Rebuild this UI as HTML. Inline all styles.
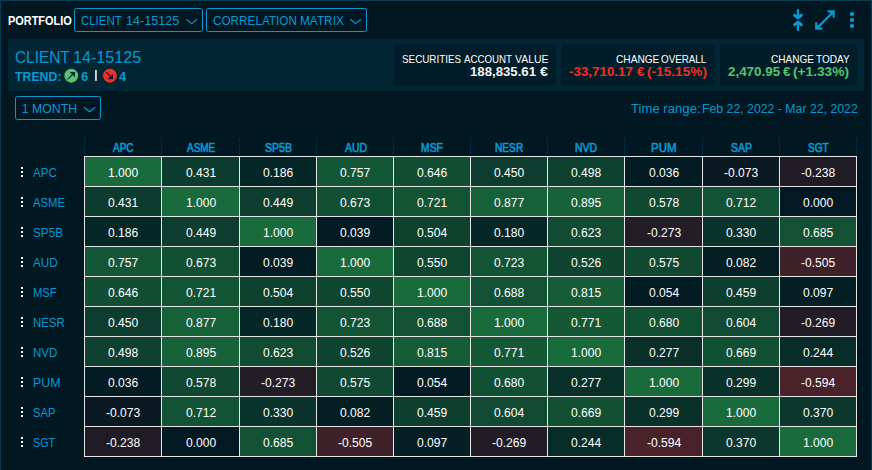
<!DOCTYPE html><html><head><meta charset="utf-8"><title>Portfolio</title><style>
html,body{margin:0;padding:0}body{width:872px;height:470px;background:#011721;overflow:hidden;position:relative;font-family:"Liberation Sans",sans-serif}
.a{position:absolute}.t{position:absolute;white-space:pre;line-height:1;margin:0}
.frame{left:0;top:0;width:872px;height:470px;box-sizing:border-box;border:1px solid #083c50;border-bottom:none}
.dd{box-sizing:border-box;border:1px solid #0b98d0;border-radius:2.4px;height:24px}
.box{background:#021d2a;border-radius:4px;top:44px;height:42px}
.hl{background:#e6e6e6;height:1px}.vl{background:#e6e6e6;width:1px}
.dv{width:1px;background:repeating-linear-gradient(to bottom,#093a52 0,#093a52 1px,transparent 1px,transparent 2px);top:138px;height:17px}
.k{width:2.5px;height:2.5px;background:#fff;left:20.75px}
</style></head><body>
<div class="a frame"></div>
<div class="a dd" style="left:74px;top:8px;width:129px"></div>
<div class="a dd" style="left:206px;top:8px;width:161px"></div>
<div class="a" style="left:8px;top:39px;width:856px;height:52px;background:#022634"></div>
<div class="a box" style="left:394px;width:162px"></div>
<div class="a box" style="left:561px;width:154px"></div>
<div class="a box" style="left:720px;width:137px"></div>
<div class="a dd" style="left:15px;top:96px;width:86px"></div>
<div class="a" style="left:84px;top:156px;width:77px;height:30px;background:#1a6b3c"></div>
<div class="a" style="left:161px;top:156px;width:78px;height:30px;background:#0c3c2d"></div>
<div class="a" style="left:239px;top:156px;width:77px;height:30px;background:#062727"></div>
<div class="a" style="left:316px;top:156px;width:77px;height:30px;background:#145736"></div>
<div class="a" style="left:393px;top:156px;width:77px;height:30px;background:#124e33"></div>
<div class="a" style="left:470px;top:156px;width:77px;height:30px;background:#0d3d2e"></div>
<div class="a" style="left:547px;top:156px;width:77px;height:30px;background:#0e412f"></div>
<div class="a" style="left:624px;top:156px;width:78px;height:30px;background:#031b23"></div>
<div class="a" style="left:702px;top:156px;width:77px;height:30px;background:#0b1923"></div>
<div class="a" style="left:779px;top:156px;width:77px;height:30px;background:#1f1c25"></div>
<div class="a" style="left:84px;top:186px;width:77px;height:30px;background:#0c3c2d"></div>
<div class="a" style="left:161px;top:186px;width:78px;height:30px;background:#1a6b3c"></div>
<div class="a" style="left:239px;top:186px;width:77px;height:30px;background:#0d3d2e"></div>
<div class="a" style="left:316px;top:186px;width:77px;height:30px;background:#125033"></div>
<div class="a" style="left:393px;top:186px;width:77px;height:30px;background:#135435"></div>
<div class="a" style="left:470px;top:186px;width:77px;height:30px;background:#176139"></div>
<div class="a" style="left:547px;top:186px;width:77px;height:30px;background:#176239"></div>
<div class="a" style="left:624px;top:186px;width:78px;height:30px;background:#104831"></div>
<div class="a" style="left:702px;top:186px;width:77px;height:30px;background:#135335"></div>
<div class="a" style="left:779px;top:186px;width:77px;height:30px;background:#021822"></div>
<div class="a" style="left:84px;top:216px;width:77px;height:30px;background:#062727"></div>
<div class="a" style="left:161px;top:216px;width:78px;height:30px;background:#0d3d2e"></div>
<div class="a" style="left:239px;top:216px;width:77px;height:30px;background:#1a6b3c"></div>
<div class="a" style="left:316px;top:216px;width:77px;height:30px;background:#031b23"></div>
<div class="a" style="left:393px;top:216px;width:77px;height:30px;background:#0e422f"></div>
<div class="a" style="left:470px;top:216px;width:77px;height:30px;background:#062727"></div>
<div class="a" style="left:547px;top:216px;width:77px;height:30px;background:#114c32"></div>
<div class="a" style="left:624px;top:216px;width:78px;height:30px;background:#231d26"></div>
<div class="a" style="left:702px;top:216px;width:77px;height:30px;background:#0a332b"></div>
<div class="a" style="left:779px;top:216px;width:77px;height:30px;background:#125134"></div>
<div class="a" style="left:84px;top:246px;width:77px;height:30px;background:#145736"></div>
<div class="a" style="left:161px;top:246px;width:78px;height:30px;background:#125033"></div>
<div class="a" style="left:239px;top:246px;width:77px;height:30px;background:#031b23"></div>
<div class="a" style="left:316px;top:246px;width:77px;height:30px;background:#1a6b3c"></div>
<div class="a" style="left:393px;top:246px;width:77px;height:30px;background:#0f4630"></div>
<div class="a" style="left:470px;top:246px;width:77px;height:30px;background:#135435"></div>
<div class="a" style="left:547px;top:246px;width:77px;height:30px;background:#0f4430"></div>
<div class="a" style="left:624px;top:246px;width:78px;height:30px;background:#104831"></div>
<div class="a" style="left:702px;top:246px;width:77px;height:30px;background:#041f24"></div>
<div class="a" style="left:779px;top:246px;width:77px;height:30px;background:#3f2129"></div>
<div class="a" style="left:84px;top:276px;width:77px;height:30px;background:#124e33"></div>
<div class="a" style="left:161px;top:276px;width:78px;height:30px;background:#135435"></div>
<div class="a" style="left:239px;top:276px;width:77px;height:30px;background:#0e422f"></div>
<div class="a" style="left:316px;top:276px;width:77px;height:30px;background:#0f4630"></div>
<div class="a" style="left:393px;top:276px;width:77px;height:30px;background:#1a6b3c"></div>
<div class="a" style="left:470px;top:276px;width:77px;height:30px;background:#135134"></div>
<div class="a" style="left:547px;top:276px;width:77px;height:30px;background:#165c37"></div>
<div class="a" style="left:624px;top:276px;width:78px;height:30px;background:#031c23"></div>
<div class="a" style="left:702px;top:276px;width:77px;height:30px;background:#0d3e2e"></div>
<div class="a" style="left:779px;top:276px;width:77px;height:30px;background:#042025"></div>
<div class="a" style="left:84px;top:306px;width:77px;height:30px;background:#0d3d2e"></div>
<div class="a" style="left:161px;top:306px;width:78px;height:30px;background:#176139"></div>
<div class="a" style="left:239px;top:306px;width:77px;height:30px;background:#062727"></div>
<div class="a" style="left:316px;top:306px;width:77px;height:30px;background:#135435"></div>
<div class="a" style="left:393px;top:306px;width:77px;height:30px;background:#135134"></div>
<div class="a" style="left:470px;top:306px;width:77px;height:30px;background:#1a6b3c"></div>
<div class="a" style="left:547px;top:306px;width:77px;height:30px;background:#155836"></div>
<div class="a" style="left:624px;top:306px;width:78px;height:30px;background:#125034"></div>
<div class="a" style="left:702px;top:306px;width:77px;height:30px;background:#104a32"></div>
<div class="a" style="left:779px;top:306px;width:77px;height:30px;background:#221d25"></div>
<div class="a" style="left:84px;top:336px;width:77px;height:30px;background:#0e412f"></div>
<div class="a" style="left:161px;top:336px;width:78px;height:30px;background:#176239"></div>
<div class="a" style="left:239px;top:336px;width:77px;height:30px;background:#114c32"></div>
<div class="a" style="left:316px;top:336px;width:77px;height:30px;background:#0f4430"></div>
<div class="a" style="left:393px;top:336px;width:77px;height:30px;background:#165c37"></div>
<div class="a" style="left:470px;top:336px;width:77px;height:30px;background:#155836"></div>
<div class="a" style="left:547px;top:336px;width:77px;height:30px;background:#1a6b3c"></div>
<div class="a" style="left:624px;top:336px;width:78px;height:30px;background:#092f29"></div>
<div class="a" style="left:702px;top:336px;width:77px;height:30px;background:#125033"></div>
<div class="a" style="left:779px;top:336px;width:77px;height:30px;background:#082c28"></div>
<div class="a" style="left:84px;top:366px;width:77px;height:30px;background:#031b23"></div>
<div class="a" style="left:161px;top:366px;width:78px;height:30px;background:#104831"></div>
<div class="a" style="left:239px;top:366px;width:77px;height:30px;background:#231d26"></div>
<div class="a" style="left:316px;top:366px;width:77px;height:30px;background:#104831"></div>
<div class="a" style="left:393px;top:366px;width:77px;height:30px;background:#031c23"></div>
<div class="a" style="left:470px;top:366px;width:77px;height:30px;background:#125034"></div>
<div class="a" style="left:547px;top:366px;width:77px;height:30px;background:#092f29"></div>
<div class="a" style="left:624px;top:366px;width:78px;height:30px;background:#1a6b3c"></div>
<div class="a" style="left:702px;top:366px;width:77px;height:30px;background:#09312a"></div>
<div class="a" style="left:779px;top:366px;width:77px;height:30px;background:#49222a"></div>
<div class="a" style="left:84px;top:396px;width:77px;height:30px;background:#0b1923"></div>
<div class="a" style="left:161px;top:396px;width:78px;height:30px;background:#135335"></div>
<div class="a" style="left:239px;top:396px;width:77px;height:30px;background:#0a332b"></div>
<div class="a" style="left:316px;top:396px;width:77px;height:30px;background:#041f24"></div>
<div class="a" style="left:393px;top:396px;width:77px;height:30px;background:#0d3e2e"></div>
<div class="a" style="left:470px;top:396px;width:77px;height:30px;background:#104a32"></div>
<div class="a" style="left:547px;top:396px;width:77px;height:30px;background:#125033"></div>
<div class="a" style="left:624px;top:396px;width:78px;height:30px;background:#09312a"></div>
<div class="a" style="left:702px;top:396px;width:77px;height:30px;background:#1a6b3c"></div>
<div class="a" style="left:779px;top:396px;width:77px;height:30px;background:#0b372c"></div>
<div class="a" style="left:84px;top:426px;width:77px;height:30px;background:#1f1c25"></div>
<div class="a" style="left:161px;top:426px;width:78px;height:30px;background:#021822"></div>
<div class="a" style="left:239px;top:426px;width:77px;height:30px;background:#125134"></div>
<div class="a" style="left:316px;top:426px;width:77px;height:30px;background:#3f2129"></div>
<div class="a" style="left:393px;top:426px;width:77px;height:30px;background:#042025"></div>
<div class="a" style="left:470px;top:426px;width:77px;height:30px;background:#221d25"></div>
<div class="a" style="left:547px;top:426px;width:77px;height:30px;background:#082c28"></div>
<div class="a" style="left:624px;top:426px;width:78px;height:30px;background:#49222a"></div>
<div class="a" style="left:702px;top:426px;width:77px;height:30px;background:#0b372c"></div>
<div class="a" style="left:779px;top:426px;width:77px;height:30px;background:#1a6b3c"></div>
<div class="a hl" style="left:84px;top:156px;width:773px"></div>
<div class="a hl" style="left:84px;top:186px;width:773px"></div>
<div class="a hl" style="left:84px;top:216px;width:773px"></div>
<div class="a hl" style="left:84px;top:246px;width:773px"></div>
<div class="a hl" style="left:84px;top:276px;width:773px"></div>
<div class="a hl" style="left:84px;top:306px;width:773px"></div>
<div class="a hl" style="left:84px;top:336px;width:773px"></div>
<div class="a hl" style="left:84px;top:366px;width:773px"></div>
<div class="a hl" style="left:84px;top:396px;width:773px"></div>
<div class="a hl" style="left:84px;top:426px;width:773px"></div>
<div class="a hl" style="left:84px;top:456px;width:773px"></div>
<div class="a vl" style="left:84px;top:156px;height:301px"></div>
<div class="a dv" style="left:84px"></div>
<div class="a vl" style="left:161px;top:156px;height:301px"></div>
<div class="a dv" style="left:161px"></div>
<div class="a vl" style="left:239px;top:156px;height:301px"></div>
<div class="a dv" style="left:239px"></div>
<div class="a vl" style="left:316px;top:156px;height:301px"></div>
<div class="a dv" style="left:316px"></div>
<div class="a vl" style="left:393px;top:156px;height:301px"></div>
<div class="a dv" style="left:393px"></div>
<div class="a vl" style="left:470px;top:156px;height:301px"></div>
<div class="a dv" style="left:470px"></div>
<div class="a vl" style="left:547px;top:156px;height:301px"></div>
<div class="a dv" style="left:547px"></div>
<div class="a vl" style="left:624px;top:156px;height:301px"></div>
<div class="a dv" style="left:624px"></div>
<div class="a vl" style="left:702px;top:156px;height:301px"></div>
<div class="a dv" style="left:702px"></div>
<div class="a vl" style="left:779px;top:156px;height:301px"></div>
<div class="a dv" style="left:779px"></div>
<div class="a vl" style="left:856px;top:156px;height:301px"></div>
<div class="a dv" style="left:856px"></div>
<div class="a k" style="top:166.75px"></div>
<div class="a k" style="top:170.75px"></div>
<div class="a k" style="top:174.75px"></div>
<div class="a k" style="top:196.75px"></div>
<div class="a k" style="top:200.75px"></div>
<div class="a k" style="top:204.75px"></div>
<div class="a k" style="top:226.75px"></div>
<div class="a k" style="top:230.75px"></div>
<div class="a k" style="top:234.75px"></div>
<div class="a k" style="top:256.75px"></div>
<div class="a k" style="top:260.75px"></div>
<div class="a k" style="top:264.75px"></div>
<div class="a k" style="top:286.75px"></div>
<div class="a k" style="top:290.75px"></div>
<div class="a k" style="top:294.75px"></div>
<div class="a k" style="top:316.75px"></div>
<div class="a k" style="top:320.75px"></div>
<div class="a k" style="top:324.75px"></div>
<div class="a k" style="top:346.75px"></div>
<div class="a k" style="top:350.75px"></div>
<div class="a k" style="top:354.75px"></div>
<div class="a k" style="top:376.75px"></div>
<div class="a k" style="top:380.75px"></div>
<div class="a k" style="top:384.75px"></div>
<div class="a k" style="top:406.75px"></div>
<div class="a k" style="top:410.75px"></div>
<div class="a k" style="top:414.75px"></div>
<div class="a k" style="top:436.75px"></div>
<div class="a k" style="top:440.75px"></div>
<div class="a k" style="top:444.75px"></div>
<svg class="a" style="left:0;top:0" width="872" height="470" viewBox="0 0 872 470">
<polyline points="186.7,19.5 191.75,23.6 196.8,19.5" fill="none" stroke="#0b98d0" stroke-width="1.15" stroke-linecap="round" stroke-linejoin="round"/>
<polyline points="350.5,19.5 355.6,23.6 360.7,19.5" fill="none" stroke="#0b98d0" stroke-width="1.15" stroke-linecap="round" stroke-linejoin="round"/>
<polyline points="84.3,107.5 89.6,111.8 94.9,107.5" fill="none" stroke="#0b98d0" stroke-width="1.15" stroke-linecap="round" stroke-linejoin="round"/>
<circle cx="71.3" cy="75.7" r="6.95" fill="#5cc468"/>
<path d="M67.6 79.3 L73.6 73.3" fill="none" stroke="#0b2440" stroke-width="1.1"/>
<path d="M69.6 71.9 H75.0 V77.3 Z" fill="#0b2440"/>
<circle cx="109.9" cy="75.7" r="6.95" fill="#ee3124"/>
<path d="M106.3 72.2 L112 77.9" fill="none" stroke="#2a1030" stroke-width="1.1"/>
<path d="M107.4 79.2 H113.0 V73.8 Z" fill="#2a1030"/>
<rect x="95.1" y="70" width="1.7" height="10.9" fill="#f1e9dc"/>
<path d="M798 10.1 V18 M798 29.9 V22" fill="none" stroke="#0b98d0" stroke-width="2.4" stroke-linecap="round"/>
<path d="M794.6 15.3 L798 17.9 L801.4 15.3 M794.6 24.7 L798 22.1 L801.4 24.7" fill="none" stroke="#0b98d0" stroke-width="3" stroke-linecap="round" stroke-linejoin="round"/>
<path d="M817.6 27.6 L833 12.2" fill="none" stroke="#0b98d0" stroke-width="2.2"/>
<path d="M828.4 11.4 H833.7 V16.8 M816.2 23.2 V28.6 H821.6" fill="none" stroke="#0b98d0" stroke-width="2.2" stroke-linecap="round" stroke-linejoin="miter"/>
<path d="M829.2 11.4 H833.7 V15.9 Z M816.2 24.1 V28.6 H820.7 Z" fill="#0b98d0"/>
<circle cx="852" cy="14.1" r="2.15" fill="#0b98d0"/>
<circle cx="852" cy="20.1" r="2.15" fill="#0b98d0"/>
<circle cx="852" cy="26.1" r="2.15" fill="#0b98d0"/>
</svg>
<div class="t" style="font-size:13.43px;color:#ffffff;font-weight:700;left:7.89px;top:13.63px;transform-origin:0 0;transform:scaleX(0.8143);">PORTFOLIO</div>
<div class="t" style="font-size:13.43px;color:#0b98d0;font-weight:400;left:81.06px;top:13.63px;transform-origin:0 0;transform:scaleX(0.8513);">CLIENT</div>
<div class="t" style="font-size:13.43px;color:#0b98d0;font-weight:400;left:126.06px;top:13.63px;transform-origin:0 0;transform:scaleX(0.9394);">14-15125</div>
<div class="t" style="font-size:13.43px;color:#0b98d0;font-weight:400;left:212.94px;top:13.63px;transform-origin:0 0;transform:scaleX(0.8743);">CORRELATION</div>
<div class="t" style="font-size:13.43px;color:#0b98d0;font-weight:400;left:299.82px;top:13.63px;transform-origin:0 0;transform:scaleX(0.8825);">MATRIX</div>
<div class="t" style="font-size:17.27px;color:#0b98d0;font-weight:400;left:14.73px;top:49.18px;transform-origin:0 0;transform:scaleX(0.8913);">CLIENT</div>
<div class="t" style="font-size:17.27px;color:#0b98d0;font-weight:400;left:73.03px;top:49.18px;transform-origin:0 0;transform:scaleX(0.9366);">14-15125</div>
<div class="t" style="font-size:13.43px;color:#0b98d0;font-weight:700;left:15.40px;top:69.63px;transform-origin:0 0;transform:scaleX(0.9172);">TREND:</div>
<div class="t" style="font-size:13.43px;color:#0b98d0;font-weight:700;left:80.61px;top:69.63px;transform-origin:0 0;transform:scaleX(0.9846);">6</div>
<div class="t" style="font-size:13.43px;color:#0b98d0;font-weight:700;left:118.96px;top:69.63px;transform-origin:0 0;transform:scaleX(0.9655);">4</div>
<div class="t" style="font-size:13.43px;color:#0b98d0;font-weight:400;left:22.15px;top:101.63px;transform-origin:0 0;transform:scaleX(0.8522);">1</div>
<div class="t" style="font-size:13.43px;color:#0b98d0;font-weight:400;left:31.79px;top:101.63px;transform-origin:0 0;transform:scaleX(0.9143);">MONTH</div>
<div class="t" style="font-size:11.51px;color:#ffffff;font-weight:400;left:402.27px;top:54.26px;transform-origin:0 0;transform:scaleX(0.8559);">SECURITIES</div>
<div class="t" style="font-size:11.51px;color:#ffffff;font-weight:400;left:464.20px;top:54.26px;transform-origin:0 0;transform:scaleX(0.8441);">ACCOUNT</div>
<div class="t" style="font-size:11.51px;color:#ffffff;font-weight:400;left:514.60px;top:54.26px;transform-origin:0 0;transform:scaleX(0.9068);">VALUE</div>
<div class="t" style="font-size:13.43px;color:#f2f2f2;font-weight:700;left:470.06px;top:65.33px;transform-origin:0 0;transform:scaleX(0.9826);">188,835.61</div>
<div class="t" style="font-size:13.43px;color:#f2f2f2;font-weight:700;left:540.00px;top:65.33px;transform-origin:0 0;transform:scaleX(1.0621);">€</div>
<div class="t" style="font-size:11.51px;color:#ffffff;font-weight:400;left:616.06px;top:54.26px;transform-origin:0 0;transform:scaleX(0.8808);">CHANGE</div>
<div class="t" style="font-size:11.51px;color:#ffffff;font-weight:400;left:661.47px;top:54.26px;transform-origin:0 0;transform:scaleX(0.8536);">OVERALL</div>
<div class="t" style="font-size:13.43px;color:#ee3124;font-weight:700;left:569.10px;top:65.33px;transform-origin:0 0;transform:scaleX(0.9960);">-33,710.17</div>
<div class="t" style="font-size:13.43px;color:#ee3124;font-weight:700;left:636.70px;top:65.33px;transform-origin:0 0;transform:scaleX(0.9931);">€</div>
<div class="t" style="font-size:13.43px;color:#ee3124;font-weight:700;left:647.24px;top:65.33px;transform-origin:0 0;transform:scaleX(1.0174);">(-15.15%)</div>
<div class="t" style="font-size:11.51px;color:#ffffff;font-weight:400;left:770.66px;top:54.26px;transform-origin:0 0;transform:scaleX(0.8746);">CHANGE</div>
<div class="t" style="font-size:11.51px;color:#ffffff;font-weight:400;left:815.98px;top:54.26px;transform-origin:0 0;transform:scaleX(0.8737);">TODAY</div>
<div class="t" style="font-size:13.43px;color:#55c56d;font-weight:700;left:727.60px;top:65.33px;transform-origin:0 0;transform:scaleX(0.9981);">2,470.95</div>
<div class="t" style="font-size:13.43px;color:#55c56d;font-weight:700;left:782.60px;top:65.33px;transform-origin:0 0;transform:scaleX(1.0207);">€</div>
<div class="t" style="font-size:13.43px;color:#55c56d;font-weight:700;left:793.43px;top:65.33px;transform-origin:0 0;transform:scaleX(1.0206);">(+1.33%)</div>
<div class="t" style="font-size:13.43px;color:#0b98d0;font-weight:400;left:630.66px;top:101.63px;transform-origin:0 0;transform:scaleX(0.9792);">Time range:</div>
<div class="t" style="font-size:13.43px;color:#0b98d0;font-weight:400;left:701.78px;top:101.63px;transform-origin:0 0;transform:scaleX(0.9157);">Feb 22, 2022 - Mar 22, 2022</div>
<div class="t" style="font-size:12.47px;color:#0b98d0;font-weight:400;left:113.25px;top:142.34px;transform-origin:0 0;transform:scaleX(0.8038);-webkit-text-stroke:0.65px #0b98d0;">APC</div>
<div class="t" style="font-size:13.43px;color:#0b98d0;font-weight:400;left:33.10px;top:165.63px;transform-origin:0 0;transform:scaleX(0.8593);">APC</div>
<div class="t" style="font-size:12.47px;color:#0b98d0;font-weight:400;left:186.90px;top:142.34px;transform-origin:0 0;transform:scaleX(0.8000);-webkit-text-stroke:0.65px #0b98d0;">ASME</div>
<div class="t" style="font-size:13.43px;color:#0b98d0;font-weight:400;left:33.10px;top:195.63px;transform-origin:0 0;transform:scaleX(0.8427);">ASME</div>
<div class="t" style="font-size:12.47px;color:#0b98d0;font-weight:400;left:264.89px;top:142.34px;transform-origin:0 0;transform:scaleX(0.8448);-webkit-text-stroke:0.65px #0b98d0;">SP5B</div>
<div class="t" style="font-size:13.43px;color:#0b98d0;font-weight:400;left:32.96px;top:225.63px;transform-origin:0 0;transform:scaleX(0.8752);">SP5B</div>
<div class="t" style="font-size:12.47px;color:#0b98d0;font-weight:400;left:344.67px;top:142.34px;transform-origin:0 0;transform:scaleX(0.8340);-webkit-text-stroke:0.65px #0b98d0;">AUD</div>
<div class="t" style="font-size:13.43px;color:#0b98d0;font-weight:400;left:33.20px;top:255.63px;transform-origin:0 0;transform:scaleX(0.8721);">AUD</div>
<div class="t" style="font-size:12.47px;color:#0b98d0;font-weight:400;left:421.08px;top:142.34px;transform-origin:0 0;transform:scaleX(0.8314);-webkit-text-stroke:0.65px #0b98d0;">MSF</div>
<div class="t" style="font-size:13.43px;color:#0b98d0;font-weight:400;left:33.07px;top:285.63px;transform-origin:0 0;transform:scaleX(0.8336);">MSF</div>
<div class="t" style="font-size:12.47px;color:#0b98d0;font-weight:400;left:494.94px;top:142.34px;transform-origin:0 0;transform:scaleX(0.8148);-webkit-text-stroke:0.65px #0b98d0;">NESR</div>
<div class="t" style="font-size:13.43px;color:#0b98d0;font-weight:400;left:33.05px;top:315.63px;transform-origin:0 0;transform:scaleX(0.8503);">NESR</div>
<div class="t" style="font-size:12.47px;color:#0b98d0;font-weight:400;left:575.07px;top:142.34px;transform-origin:0 0;transform:scaleX(0.8396);-webkit-text-stroke:0.65px #0b98d0;">NVD</div>
<div class="t" style="font-size:13.43px;color:#0b98d0;font-weight:400;left:33.04px;top:345.63px;transform-origin:0 0;transform:scaleX(0.8598);">NVD</div>
<div class="t" style="font-size:12.47px;color:#0b98d0;font-weight:400;left:651.01px;top:142.34px;transform-origin:0 0;transform:scaleX(0.9219);-webkit-text-stroke:0.65px #0b98d0;">PUM</div>
<div class="t" style="font-size:13.43px;color:#0b98d0;font-weight:400;left:32.98px;top:375.63px;transform-origin:0 0;transform:scaleX(0.9225);">PUM</div>
<div class="t" style="font-size:12.47px;color:#0b98d0;font-weight:400;left:730.79px;top:142.34px;transform-origin:0 0;transform:scaleX(0.8408);-webkit-text-stroke:0.65px #0b98d0;">SAP</div>
<div class="t" style="font-size:13.43px;color:#0b98d0;font-weight:400;left:32.98px;top:405.63px;transform-origin:0 0;transform:scaleX(0.8350);">SAP</div>
<div class="t" style="font-size:12.47px;color:#0b98d0;font-weight:400;left:807.80px;top:142.34px;transform-origin:0 0;transform:scaleX(0.8078);-webkit-text-stroke:0.65px #0b98d0;">SGT</div>
<div class="t" style="font-size:13.43px;color:#0b98d0;font-weight:400;left:33.00px;top:435.63px;transform-origin:0 0;transform:scaleX(0.8037);">SGT</div>
<div class="t" style="font-size:13.43px;color:#ffffff;font-weight:400;left:108.20px;top:165.63px;transform-origin:0 0;transform:scaleX(0.9000);">1.000</div>
<div class="t" style="font-size:13.43px;color:#ffffff;font-weight:400;left:185.93px;top:165.63px;transform-origin:0 0;transform:scaleX(0.9000);">0.431</div>
<div class="t" style="font-size:13.43px;color:#ffffff;font-weight:400;left:263.43px;top:165.63px;transform-origin:0 0;transform:scaleX(0.9000);">0.186</div>
<div class="t" style="font-size:13.43px;color:#ffffff;font-weight:400;left:340.43px;top:165.63px;transform-origin:0 0;transform:scaleX(0.9000);">0.757</div>
<div class="t" style="font-size:13.43px;color:#ffffff;font-weight:400;left:417.43px;top:165.63px;transform-origin:0 0;transform:scaleX(0.9000);">0.646</div>
<div class="t" style="font-size:13.43px;color:#ffffff;font-weight:400;left:494.43px;top:165.63px;transform-origin:0 0;transform:scaleX(0.9000);">0.450</div>
<div class="t" style="font-size:13.43px;color:#ffffff;font-weight:400;left:571.42px;top:165.63px;transform-origin:0 0;transform:scaleX(0.9000);">0.498</div>
<div class="t" style="font-size:13.43px;color:#ffffff;font-weight:400;left:648.92px;top:165.63px;transform-origin:0 0;transform:scaleX(0.9000);">0.036</div>
<div class="t" style="font-size:13.43px;color:#ffffff;font-weight:400;left:724.40px;top:165.63px;transform-origin:0 0;transform:scaleX(0.9000);">-0.073</div>
<div class="t" style="font-size:13.43px;color:#ffffff;font-weight:400;left:801.40px;top:165.63px;transform-origin:0 0;transform:scaleX(0.9000);">-0.238</div>
<div class="t" style="font-size:13.43px;color:#ffffff;font-weight:400;left:108.42px;top:195.63px;transform-origin:0 0;transform:scaleX(0.9000);">0.431</div>
<div class="t" style="font-size:13.43px;color:#ffffff;font-weight:400;left:185.70px;top:195.63px;transform-origin:0 0;transform:scaleX(0.9000);">1.000</div>
<div class="t" style="font-size:13.43px;color:#ffffff;font-weight:400;left:263.43px;top:195.63px;transform-origin:0 0;transform:scaleX(0.9000);">0.449</div>
<div class="t" style="font-size:13.43px;color:#ffffff;font-weight:400;left:340.43px;top:195.63px;transform-origin:0 0;transform:scaleX(0.9000);">0.673</div>
<div class="t" style="font-size:13.43px;color:#ffffff;font-weight:400;left:417.43px;top:195.63px;transform-origin:0 0;transform:scaleX(0.9000);">0.721</div>
<div class="t" style="font-size:13.43px;color:#ffffff;font-weight:400;left:494.43px;top:195.63px;transform-origin:0 0;transform:scaleX(0.9000);">0.877</div>
<div class="t" style="font-size:13.43px;color:#ffffff;font-weight:400;left:571.42px;top:195.63px;transform-origin:0 0;transform:scaleX(0.9000);">0.895</div>
<div class="t" style="font-size:13.43px;color:#ffffff;font-weight:400;left:648.92px;top:195.63px;transform-origin:0 0;transform:scaleX(0.9000);">0.578</div>
<div class="t" style="font-size:13.43px;color:#ffffff;font-weight:400;left:726.42px;top:195.63px;transform-origin:0 0;transform:scaleX(0.9000);">0.712</div>
<div class="t" style="font-size:13.43px;color:#ffffff;font-weight:400;left:803.42px;top:195.63px;transform-origin:0 0;transform:scaleX(0.9000);">0.000</div>
<div class="t" style="font-size:13.43px;color:#ffffff;font-weight:400;left:108.42px;top:225.63px;transform-origin:0 0;transform:scaleX(0.9000);">0.186</div>
<div class="t" style="font-size:13.43px;color:#ffffff;font-weight:400;left:185.93px;top:225.63px;transform-origin:0 0;transform:scaleX(0.9000);">0.449</div>
<div class="t" style="font-size:13.43px;color:#ffffff;font-weight:400;left:263.20px;top:225.63px;transform-origin:0 0;transform:scaleX(0.9000);">1.000</div>
<div class="t" style="font-size:13.43px;color:#ffffff;font-weight:400;left:340.43px;top:225.63px;transform-origin:0 0;transform:scaleX(0.9000);">0.039</div>
<div class="t" style="font-size:13.43px;color:#ffffff;font-weight:400;left:417.31px;top:225.63px;transform-origin:0 0;transform:scaleX(0.9000);">0.504</div>
<div class="t" style="font-size:13.43px;color:#ffffff;font-weight:400;left:494.43px;top:225.63px;transform-origin:0 0;transform:scaleX(0.9000);">0.180</div>
<div class="t" style="font-size:13.43px;color:#ffffff;font-weight:400;left:571.42px;top:225.63px;transform-origin:0 0;transform:scaleX(0.9000);">0.623</div>
<div class="t" style="font-size:13.43px;color:#ffffff;font-weight:400;left:646.90px;top:225.63px;transform-origin:0 0;transform:scaleX(0.9000);">-0.273</div>
<div class="t" style="font-size:13.43px;color:#ffffff;font-weight:400;left:726.42px;top:225.63px;transform-origin:0 0;transform:scaleX(0.9000);">0.330</div>
<div class="t" style="font-size:13.43px;color:#ffffff;font-weight:400;left:803.42px;top:225.63px;transform-origin:0 0;transform:scaleX(0.9000);">0.685</div>
<div class="t" style="font-size:13.43px;color:#ffffff;font-weight:400;left:108.42px;top:255.63px;transform-origin:0 0;transform:scaleX(0.9000);">0.757</div>
<div class="t" style="font-size:13.43px;color:#ffffff;font-weight:400;left:185.93px;top:255.63px;transform-origin:0 0;transform:scaleX(0.9000);">0.673</div>
<div class="t" style="font-size:13.43px;color:#ffffff;font-weight:400;left:263.43px;top:255.63px;transform-origin:0 0;transform:scaleX(0.9000);">0.039</div>
<div class="t" style="font-size:13.43px;color:#ffffff;font-weight:400;left:340.20px;top:255.63px;transform-origin:0 0;transform:scaleX(0.9000);">1.000</div>
<div class="t" style="font-size:13.43px;color:#ffffff;font-weight:400;left:417.43px;top:255.63px;transform-origin:0 0;transform:scaleX(0.9000);">0.550</div>
<div class="t" style="font-size:13.43px;color:#ffffff;font-weight:400;left:494.43px;top:255.63px;transform-origin:0 0;transform:scaleX(0.9000);">0.723</div>
<div class="t" style="font-size:13.43px;color:#ffffff;font-weight:400;left:571.42px;top:255.63px;transform-origin:0 0;transform:scaleX(0.9000);">0.526</div>
<div class="t" style="font-size:13.43px;color:#ffffff;font-weight:400;left:648.92px;top:255.63px;transform-origin:0 0;transform:scaleX(0.9000);">0.575</div>
<div class="t" style="font-size:13.43px;color:#ffffff;font-weight:400;left:726.42px;top:255.63px;transform-origin:0 0;transform:scaleX(0.9000);">0.082</div>
<div class="t" style="font-size:13.43px;color:#ffffff;font-weight:400;left:801.40px;top:255.63px;transform-origin:0 0;transform:scaleX(0.9000);">-0.505</div>
<div class="t" style="font-size:13.43px;color:#ffffff;font-weight:400;left:108.42px;top:285.63px;transform-origin:0 0;transform:scaleX(0.9000);">0.646</div>
<div class="t" style="font-size:13.43px;color:#ffffff;font-weight:400;left:185.93px;top:285.63px;transform-origin:0 0;transform:scaleX(0.9000);">0.721</div>
<div class="t" style="font-size:13.43px;color:#ffffff;font-weight:400;left:263.31px;top:285.63px;transform-origin:0 0;transform:scaleX(0.9000);">0.504</div>
<div class="t" style="font-size:13.43px;color:#ffffff;font-weight:400;left:340.43px;top:285.63px;transform-origin:0 0;transform:scaleX(0.9000);">0.550</div>
<div class="t" style="font-size:13.43px;color:#ffffff;font-weight:400;left:417.20px;top:285.63px;transform-origin:0 0;transform:scaleX(0.9000);">1.000</div>
<div class="t" style="font-size:13.43px;color:#ffffff;font-weight:400;left:494.43px;top:285.63px;transform-origin:0 0;transform:scaleX(0.9000);">0.688</div>
<div class="t" style="font-size:13.43px;color:#ffffff;font-weight:400;left:571.42px;top:285.63px;transform-origin:0 0;transform:scaleX(0.9000);">0.815</div>
<div class="t" style="font-size:13.43px;color:#ffffff;font-weight:400;left:648.81px;top:285.63px;transform-origin:0 0;transform:scaleX(0.9000);">0.054</div>
<div class="t" style="font-size:13.43px;color:#ffffff;font-weight:400;left:726.42px;top:285.63px;transform-origin:0 0;transform:scaleX(0.9000);">0.459</div>
<div class="t" style="font-size:13.43px;color:#ffffff;font-weight:400;left:803.42px;top:285.63px;transform-origin:0 0;transform:scaleX(0.9000);">0.097</div>
<div class="t" style="font-size:13.43px;color:#ffffff;font-weight:400;left:108.42px;top:315.63px;transform-origin:0 0;transform:scaleX(0.9000);">0.450</div>
<div class="t" style="font-size:13.43px;color:#ffffff;font-weight:400;left:185.93px;top:315.63px;transform-origin:0 0;transform:scaleX(0.9000);">0.877</div>
<div class="t" style="font-size:13.43px;color:#ffffff;font-weight:400;left:263.43px;top:315.63px;transform-origin:0 0;transform:scaleX(0.9000);">0.180</div>
<div class="t" style="font-size:13.43px;color:#ffffff;font-weight:400;left:340.43px;top:315.63px;transform-origin:0 0;transform:scaleX(0.9000);">0.723</div>
<div class="t" style="font-size:13.43px;color:#ffffff;font-weight:400;left:417.43px;top:315.63px;transform-origin:0 0;transform:scaleX(0.9000);">0.688</div>
<div class="t" style="font-size:13.43px;color:#ffffff;font-weight:400;left:494.20px;top:315.63px;transform-origin:0 0;transform:scaleX(0.9000);">1.000</div>
<div class="t" style="font-size:13.43px;color:#ffffff;font-weight:400;left:571.42px;top:315.63px;transform-origin:0 0;transform:scaleX(0.9000);">0.771</div>
<div class="t" style="font-size:13.43px;color:#ffffff;font-weight:400;left:648.92px;top:315.63px;transform-origin:0 0;transform:scaleX(0.9000);">0.680</div>
<div class="t" style="font-size:13.43px;color:#ffffff;font-weight:400;left:726.31px;top:315.63px;transform-origin:0 0;transform:scaleX(0.9000);">0.604</div>
<div class="t" style="font-size:13.43px;color:#ffffff;font-weight:400;left:801.40px;top:315.63px;transform-origin:0 0;transform:scaleX(0.9000);">-0.269</div>
<div class="t" style="font-size:13.43px;color:#ffffff;font-weight:400;left:108.42px;top:345.63px;transform-origin:0 0;transform:scaleX(0.9000);">0.498</div>
<div class="t" style="font-size:13.43px;color:#ffffff;font-weight:400;left:185.93px;top:345.63px;transform-origin:0 0;transform:scaleX(0.9000);">0.895</div>
<div class="t" style="font-size:13.43px;color:#ffffff;font-weight:400;left:263.43px;top:345.63px;transform-origin:0 0;transform:scaleX(0.9000);">0.623</div>
<div class="t" style="font-size:13.43px;color:#ffffff;font-weight:400;left:340.43px;top:345.63px;transform-origin:0 0;transform:scaleX(0.9000);">0.526</div>
<div class="t" style="font-size:13.43px;color:#ffffff;font-weight:400;left:417.43px;top:345.63px;transform-origin:0 0;transform:scaleX(0.9000);">0.815</div>
<div class="t" style="font-size:13.43px;color:#ffffff;font-weight:400;left:494.43px;top:345.63px;transform-origin:0 0;transform:scaleX(0.9000);">0.771</div>
<div class="t" style="font-size:13.43px;color:#ffffff;font-weight:400;left:571.20px;top:345.63px;transform-origin:0 0;transform:scaleX(0.9000);">1.000</div>
<div class="t" style="font-size:13.43px;color:#ffffff;font-weight:400;left:648.92px;top:345.63px;transform-origin:0 0;transform:scaleX(0.9000);">0.277</div>
<div class="t" style="font-size:13.43px;color:#ffffff;font-weight:400;left:726.42px;top:345.63px;transform-origin:0 0;transform:scaleX(0.9000);">0.669</div>
<div class="t" style="font-size:13.43px;color:#ffffff;font-weight:400;left:803.31px;top:345.63px;transform-origin:0 0;transform:scaleX(0.9000);">0.244</div>
<div class="t" style="font-size:13.43px;color:#ffffff;font-weight:400;left:108.42px;top:375.63px;transform-origin:0 0;transform:scaleX(0.9000);">0.036</div>
<div class="t" style="font-size:13.43px;color:#ffffff;font-weight:400;left:185.93px;top:375.63px;transform-origin:0 0;transform:scaleX(0.9000);">0.578</div>
<div class="t" style="font-size:13.43px;color:#ffffff;font-weight:400;left:261.40px;top:375.63px;transform-origin:0 0;transform:scaleX(0.9000);">-0.273</div>
<div class="t" style="font-size:13.43px;color:#ffffff;font-weight:400;left:340.43px;top:375.63px;transform-origin:0 0;transform:scaleX(0.9000);">0.575</div>
<div class="t" style="font-size:13.43px;color:#ffffff;font-weight:400;left:417.31px;top:375.63px;transform-origin:0 0;transform:scaleX(0.9000);">0.054</div>
<div class="t" style="font-size:13.43px;color:#ffffff;font-weight:400;left:494.43px;top:375.63px;transform-origin:0 0;transform:scaleX(0.9000);">0.680</div>
<div class="t" style="font-size:13.43px;color:#ffffff;font-weight:400;left:571.42px;top:375.63px;transform-origin:0 0;transform:scaleX(0.9000);">0.277</div>
<div class="t" style="font-size:13.43px;color:#ffffff;font-weight:400;left:648.70px;top:375.63px;transform-origin:0 0;transform:scaleX(0.9000);">1.000</div>
<div class="t" style="font-size:13.43px;color:#ffffff;font-weight:400;left:726.42px;top:375.63px;transform-origin:0 0;transform:scaleX(0.9000);">0.299</div>
<div class="t" style="font-size:13.43px;color:#ffffff;font-weight:400;left:801.29px;top:375.63px;transform-origin:0 0;transform:scaleX(0.9000);">-0.594</div>
<div class="t" style="font-size:13.43px;color:#ffffff;font-weight:400;left:106.40px;top:405.63px;transform-origin:0 0;transform:scaleX(0.9000);">-0.073</div>
<div class="t" style="font-size:13.43px;color:#ffffff;font-weight:400;left:185.93px;top:405.63px;transform-origin:0 0;transform:scaleX(0.9000);">0.712</div>
<div class="t" style="font-size:13.43px;color:#ffffff;font-weight:400;left:263.43px;top:405.63px;transform-origin:0 0;transform:scaleX(0.9000);">0.330</div>
<div class="t" style="font-size:13.43px;color:#ffffff;font-weight:400;left:340.43px;top:405.63px;transform-origin:0 0;transform:scaleX(0.9000);">0.082</div>
<div class="t" style="font-size:13.43px;color:#ffffff;font-weight:400;left:417.43px;top:405.63px;transform-origin:0 0;transform:scaleX(0.9000);">0.459</div>
<div class="t" style="font-size:13.43px;color:#ffffff;font-weight:400;left:494.31px;top:405.63px;transform-origin:0 0;transform:scaleX(0.9000);">0.604</div>
<div class="t" style="font-size:13.43px;color:#ffffff;font-weight:400;left:571.42px;top:405.63px;transform-origin:0 0;transform:scaleX(0.9000);">0.669</div>
<div class="t" style="font-size:13.43px;color:#ffffff;font-weight:400;left:648.92px;top:405.63px;transform-origin:0 0;transform:scaleX(0.9000);">0.299</div>
<div class="t" style="font-size:13.43px;color:#ffffff;font-weight:400;left:726.20px;top:405.63px;transform-origin:0 0;transform:scaleX(0.9000);">1.000</div>
<div class="t" style="font-size:13.43px;color:#ffffff;font-weight:400;left:803.42px;top:405.63px;transform-origin:0 0;transform:scaleX(0.9000);">0.370</div>
<div class="t" style="font-size:13.43px;color:#ffffff;font-weight:400;left:106.40px;top:435.63px;transform-origin:0 0;transform:scaleX(0.9000);">-0.238</div>
<div class="t" style="font-size:13.43px;color:#ffffff;font-weight:400;left:185.93px;top:435.63px;transform-origin:0 0;transform:scaleX(0.9000);">0.000</div>
<div class="t" style="font-size:13.43px;color:#ffffff;font-weight:400;left:263.43px;top:435.63px;transform-origin:0 0;transform:scaleX(0.9000);">0.685</div>
<div class="t" style="font-size:13.43px;color:#ffffff;font-weight:400;left:338.40px;top:435.63px;transform-origin:0 0;transform:scaleX(0.9000);">-0.505</div>
<div class="t" style="font-size:13.43px;color:#ffffff;font-weight:400;left:417.43px;top:435.63px;transform-origin:0 0;transform:scaleX(0.9000);">0.097</div>
<div class="t" style="font-size:13.43px;color:#ffffff;font-weight:400;left:492.40px;top:435.63px;transform-origin:0 0;transform:scaleX(0.9000);">-0.269</div>
<div class="t" style="font-size:13.43px;color:#ffffff;font-weight:400;left:571.31px;top:435.63px;transform-origin:0 0;transform:scaleX(0.9000);">0.244</div>
<div class="t" style="font-size:13.43px;color:#ffffff;font-weight:400;left:646.79px;top:435.63px;transform-origin:0 0;transform:scaleX(0.9000);">-0.594</div>
<div class="t" style="font-size:13.43px;color:#ffffff;font-weight:400;left:726.42px;top:435.63px;transform-origin:0 0;transform:scaleX(0.9000);">0.370</div>
<div class="t" style="font-size:13.43px;color:#ffffff;font-weight:400;left:803.20px;top:435.63px;transform-origin:0 0;transform:scaleX(0.9000);">1.000</div>
</body></html>
